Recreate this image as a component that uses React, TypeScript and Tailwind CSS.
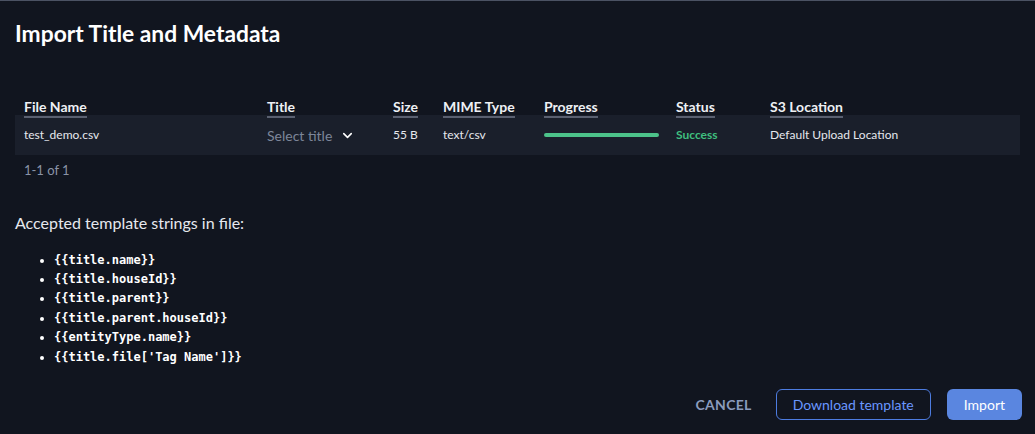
import { ChevronDown } from "lucide-react";

const templateStrings = [
  "{{title.name}}",
  "{{title.houseId}}",
  "{{title.parent}}",
  "{{title.parent.houseId}}",
  "{{entityType.name}}",
  "{{title.file['Tag Name']}}",
];

// column widths for the upload table
const columns = [
  { label: "File Name", width: "w-[243px]" },
  { label: "Title", width: "w-[126px]" },
  { label: "Size", width: "w-[50px]" },
  { label: "MIME Type", width: "w-[101px]" },
  { label: "Progress", width: "w-[132px]" },
  { label: "Status", width: "w-[94px]" },
  { label: "S3 Location", width: "flex-1" },
];

export default function App() {
  return (
    <div
      className="w-[1035px] h-[434px] bg-[#11151f] border-t border-[#4b5263] text-[#e6e8ee] flex flex-col overflow-hidden"
      style={{ fontFamily: "Lato, 'Noto Sans', sans-serif" }}
    >
      <h2 className="px-[15px] pt-[19px] text-[22.8px] font-bold leading-[26px] text-white">
        Import Title and Metadata
      </h2>

      <div className="mx-[15px] mt-[48px]">
        {/* table header */}
        <div className="flex px-[9px] h-[21px] items-start">
          {columns.map((c) => (
            <div key={c.label} className={c.width}>
              <span className="inline-block text-[14px] font-bold leading-[17px] pb-[1px] border-b-2 border-[#5a6070] text-[#eef0f4]">
                {c.label}
              </span>
            </div>
          ))}
        </div>

        {/* single file row */}
        <div className="flex items-center px-[9px] h-[40px] bg-[#1a1f2b] text-[12px]">
          <div className="w-[243px]">test_demo.csv</div>
          <div className="w-[126px] flex items-center gap-[8px] text-[14px] text-[#7d8699]">
            Select title
            <ChevronDown size={15} strokeWidth={2.5} className="text-white" />
          </div>
          <div className="w-[50px]">55 B</div>
          <div className="w-[101px]">text/csv</div>
          <div className="w-[132px] pr-[17px]">
            <div className="h-[4px] rounded-full bg-[#4cc38a]" />
          </div>
          <div className="w-[94px] font-bold text-[#3fbf7f]">Success</div>
          <div className="flex-1">Default Upload Location</div>
        </div>

        <div className="px-[9px] pt-[6px] text-[13px] text-[#8a93a6]">1-1 of 1</div>
      </div>

      <p className="px-[15px] mt-[32px] text-[16px] leading-[20px]">
        Accepted template strings in file:
      </p>

      <ul className="list-disc pl-[54px] mt-[18px] text-[12px] font-bold leading-[19.4px] text-white"
        style={{ fontFamily: "'DejaVu Sans Mono', monospace" }}
      >
        {templateStrings.map((s) => (
          <li key={s}>{s}</li>
        ))}
      </ul>

      <div className="flex-1" />

      <div className="flex justify-end items-center gap-[16px] px-[13px] pb-[14px]">
        <button className="px-[8px] h-[30px] text-[14px] font-bold tracking-[0.3px] text-[#8a9bbd]">
          CANCEL
        </button>
        <button className="h-[31px] px-[16px] rounded-[6px] border border-[#4d7ce0] text-[14px] text-[#6a97ff]">
          Download template
        </button>
        <button className="h-[31px] px-[17px] rounded-[6px] bg-[#5a86e0] text-[14px] text-white">
          Import
        </button>
      </div>
    </div>
  );
}
